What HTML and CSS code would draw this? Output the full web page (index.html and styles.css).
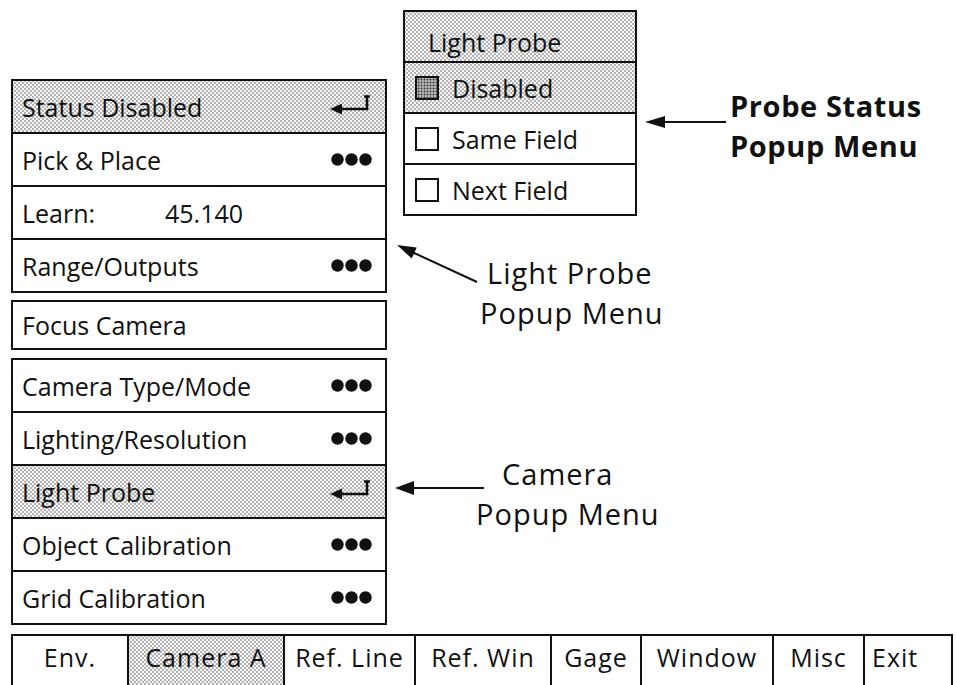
FILE: index.html
```html
<!DOCTYPE html>
<html lang="en">
<head>
    <meta charset="UTF-8">
    <meta name="viewport" content="width=device-width, initial-scale=1.0">
    <title>Light Probe Menus</title>
    <link rel="stylesheet" href="styles.css">
</head>
<body>
    <div class="screen">
        <div class="upper">
            <div class="left-col">
                <div class="menu">
                    <div class="row shaded">
                        <span>Status Disabled</span>
                        <svg class="enter" width="42" height="24" viewBox="0 0 42 24"><path d="M9 14 H37 V1.5 M34 1.5 H40" fill="none" stroke="#111" stroke-width="2.6"/><polygon points="0,14 12,8.5 12,19.5" fill="#111"/></svg>
                    </div>
                    <div class="row">
                        <span>Pick &amp; Place</span>
                        <svg class="more" width="41" height="13" viewBox="0 0 41 13"><circle cx="6.5" cy="6.5" r="6.2"/><circle cx="20.5" cy="6.5" r="6.2"/><circle cx="34.5" cy="6.5" r="6.2"/></svg>
                    </div>
                    <div class="row plain">
                        <span class="label">Learn:</span><span>45.140</span>
                    </div>
                    <div class="row">
                        <span>Range/Outputs</span>
                        <svg class="more" width="41" height="13" viewBox="0 0 41 13"><circle cx="6.5" cy="6.5" r="6.2"/><circle cx="20.5" cy="6.5" r="6.2"/><circle cx="34.5" cy="6.5" r="6.2"/></svg>
                    </div>
                </div>

                <div class="menu focus">
                    <div class="row"><span>Focus Camera</span></div>
                </div>

                <div class="menu camera">
                    <div class="row">
                        <span>Camera Type/Mode</span>
                        <svg class="more" width="41" height="13" viewBox="0 0 41 13"><circle cx="6.5" cy="6.5" r="6.2"/><circle cx="20.5" cy="6.5" r="6.2"/><circle cx="34.5" cy="6.5" r="6.2"/></svg>
                    </div>
                    <div class="row">
                        <span>Lighting/Resolution</span>
                        <svg class="more" width="41" height="13" viewBox="0 0 41 13"><circle cx="6.5" cy="6.5" r="6.2"/><circle cx="20.5" cy="6.5" r="6.2"/><circle cx="34.5" cy="6.5" r="6.2"/></svg>
                    </div>
                    <div class="row shaded">
                        <span>Light Probe</span>
                        <svg class="enter" width="42" height="24" viewBox="0 0 42 24"><path d="M9 14 H37 V1.5 M34 1.5 H40" fill="none" stroke="#111" stroke-width="2.6"/><polygon points="0,14 12,8.5 12,19.5" fill="#111"/></svg>
                    </div>
                    <div class="row">
                        <span>Object Calibration</span>
                        <svg class="more" width="41" height="13" viewBox="0 0 41 13"><circle cx="6.5" cy="6.5" r="6.2"/><circle cx="20.5" cy="6.5" r="6.2"/><circle cx="34.5" cy="6.5" r="6.2"/></svg>
                    </div>
                    <div class="row">
                        <span>Grid Calibration</span>
                        <svg class="more" width="41" height="13" viewBox="0 0 41 13"><circle cx="6.5" cy="6.5" r="6.2"/><circle cx="20.5" cy="6.5" r="6.2"/><circle cx="34.5" cy="6.5" r="6.2"/></svg>
                    </div>
                </div>
            </div>

            <div class="right-col">
                <div class="popup">
                    <div class="prow head shaded">Light Probe</div>
                    <div class="prow shaded"><span class="check on"></span>Disabled</div>
                    <div class="prow"><span class="check"></span>Same Field</div>
                    <div class="prow"><span class="check"></span>Next Field</div>
                </div>
            </div>
        </div>

        <div class="tabbar">
            <div class="tab">Env.</div>
            <div class="tab shaded">Camera A</div>
            <div class="tab">Ref. Line</div>
            <div class="tab">Ref. Win</div>
            <div class="tab">Gage</div>
            <div class="tab">Window</div>
            <div class="tab">Misc</div>
            <div class="tab exit">Exit</div>
        </div>

        <!-- callout arrows and labels -->
        <svg class="arrows" width="956" height="685" viewBox="0 0 956 685">
            <line x1="662" y1="122" x2="726" y2="122" stroke="#111" stroke-width="2"/>
            <polygon points="645,122 665,116 665,128" fill="#111"/>

            <line x1="412" y1="252" x2="477" y2="282" stroke="#111" stroke-width="2"/>
            <polygon points="397,245 411.7,258.5 416.7,247.6" fill="#111"/>

            <line x1="412" y1="488" x2="484" y2="488" stroke="#111" stroke-width="2"/>
            <polygon points="395,488 414,481 414,495" fill="#111"/>
        </svg>

        <div class="callout bold status-note">
            <span>Probe Status</span>
            <span>Popup Menu</span>
        </div>
        <div class="callout probe-note">
            <span class="first">Light Probe</span>
            <span>Popup Menu</span>
        </div>
        <div class="callout camera-note">
            <span class="first">Camera</span>
            <span>Popup Menu</span>
        </div>
    </div>
</body>
</html>
```

FILE: styles.css
```css
*{
    margin: 0;
    padding: 0;
}
body{
    background-color: #fff;
    color: #111;
    font-family: "Open Sans", "Liberation Sans", sans-serif;
    font-size: 25px;
}
.screen{
    width: 956px;
    height: 685px;
    position: relative;
    overflow: hidden;
}
.upper{
    display: flex;
    height: 625px;
}
.left-col{
    margin-left: 11px;
    padding-top: 79px;
    width: 376px;
}
.menu{
    border: 2px solid #111;
}
.menu.focus{
    margin-top: 7px;
}
.menu.camera{
    margin-top: 8px;
}
.row{
    display: flex;
    align-items: center;
    justify-content: space-between;
    height: 51px;
    padding: 0 13px 0 9px;
    border-top: 2px solid #111;
}
.row:first-child{
    border-top: 0;
}
.focus .row{
    height: 46px;
}
.row.plain{
    justify-content: flex-start;
}
.row .label{
    width: 143px;
}
.more{
    fill: #111;
}

/* halftone grey used for the selected items */
.shaded{
    background-color: #f6f6f6;
    background-image: radial-gradient(circle, #999 0.6px, transparent 1px),
                      radial-gradient(circle, #999 0.6px, transparent 1px);
    background-size: 4px 4px;
    background-position: 0 0, 2px 2px;
}

.right-col{
    margin-left: 16px;
    padding-top: 10px;
}
.popup{
    width: 230px;
    border: 2px solid #111;
}
.prow{
    display: flex;
    align-items: center;
    height: 49px;
    padding-left: 10px;
    border-top: 2px solid #111;
}
.prow:first-child{
    border-top: 0;
}
.prow.head{
    height: 39px;
    padding-top: 10px;
    padding-left: 23px;
}
.check{
    width: 20px;
    height: 20px;
    border: 2px solid #111;
    margin-right: 13px;
    background-color: #fff;
}
.check.on{
    background-color: #b0b0b0;
    background-image: radial-gradient(circle, #333 0.8px, transparent 1.1px);
    background-size: 3px 3px;
}

.tabbar{
    display: grid;
    grid-template-columns: 116px 156px 131px 136px 90px 132px 91px 90px;
    width: 942px;
    margin: 9px 0 0 11px;
    border-top: 2px solid #111;
}
.tab{
    height: 52px;
    padding-top: 4px;
    border-left: 2px solid #111;
    text-align: center;
    letter-spacing: 1px;
}
.tab.exit{
    border-right: 2px solid #111;
    text-align: left;
    padding-left: 7px;
}

.arrows{
    position: absolute;
    left: 0;
    top: 0;
    pointer-events: none;
}
.callout{
    position: absolute;
    font-size: 29px;
    line-height: 40px;
    letter-spacing: 1px;
}
.callout span{
    display: block;
}
.callout.bold{
    font-weight: 700;
    letter-spacing: 0.6px;
}
.status-note{
    left: 730px;
    top: 86px;
}
.probe-note{
    left: 480px;
    top: 253px;
}
.probe-note .first{
    margin-left: 7px;
}
.camera-note{
    left: 476px;
    top: 454px;
}
.camera-note .first{
    margin-left: 26px;
}
```
